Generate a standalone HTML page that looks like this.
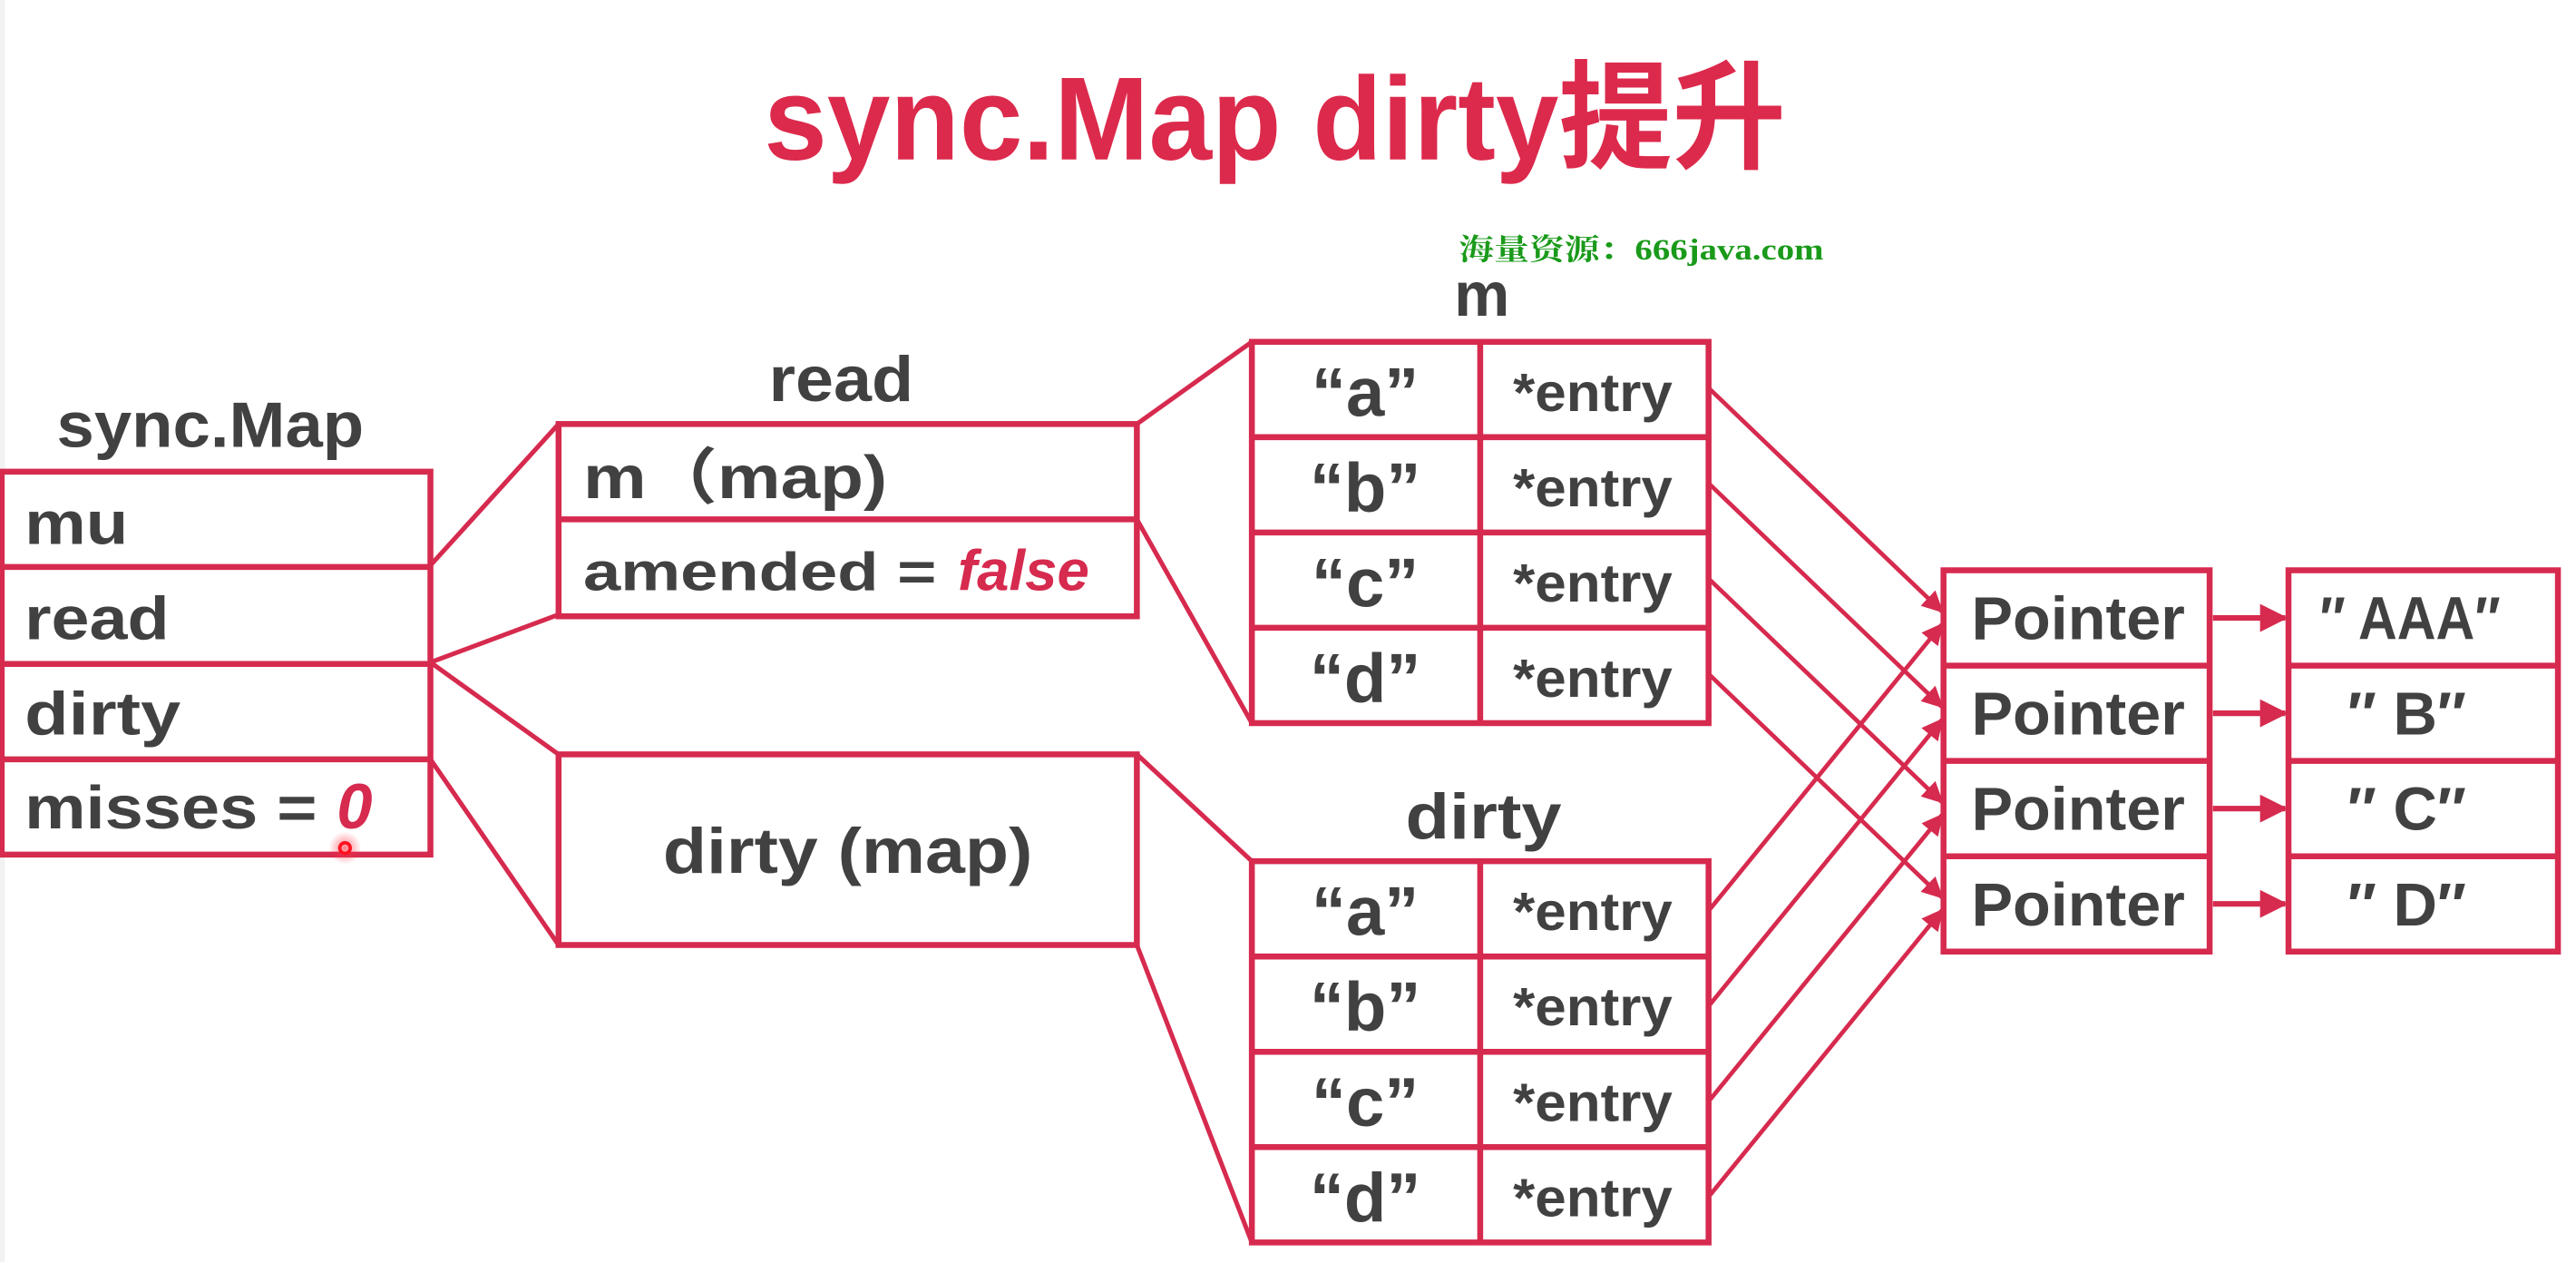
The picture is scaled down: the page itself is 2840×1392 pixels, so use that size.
<!DOCTYPE html>
<html><head><meta charset="utf-8"><style>
html,body{margin:0;padding:0;background:#fff;}
svg{display:block;}
text{font-family:"Liberation Sans","Noto Sans CJK SC",sans-serif;font-weight:bold;fill:#414141;}
</style></head><body>
<svg width="2840" height="1392" viewBox="0 0 1568 768.5" preserveAspectRatio="none" xmlns="http://www.w3.org/2000/svg">
<defs>
<marker id="ah" viewBox="0 0 10 10" refX="9" refY="5" markerWidth="5" markerHeight="5" orient="auto" markerUnits="strokeWidth">
<path d="M0,0 L10,5 L0,10 z" fill="#d62a4e"/></marker>
<radialGradient id="glow"><stop offset="0" stop-color="#ff3040" stop-opacity="0.6"/><stop offset="1" stop-color="#ff3040" stop-opacity="0"/></radialGradient>
</defs>
<rect x="0" y="0" width="3" height="768" fill="#f2f2f2"/>
<text x="776" y="97" text-anchor="middle" font-size="72" style="fill:#dc2a4c" textLength="622" lengthAdjust="spacingAndGlyphs">sync.Map dirty提升</text>
<text x="888" y="158" font-size="18" style="fill:#1a9a1a;font-family:'Liberation Serif','Noto Serif CJK SC',serif" textLength="222" lengthAdjust="spacingAndGlyphs">海量资源：666java.com</text>

<g fill="none" stroke="#d62a4e" stroke-width="3.6">
<rect x="1" y="287" width="261" height="233"/>
<line x1="1" y1="345" x2="262" y2="345"/><line x1="1" y1="404" x2="262" y2="404"/><line x1="1" y1="462" x2="262" y2="462"/>
<rect x="340" y="258" width="352" height="117"/>
<line x1="340" y1="316" x2="692" y2="316"/>
<rect x="340" y="459" width="352" height="116"/>
<rect x="762" y="208" width="278" height="232"/>
<line x1="901" y1="208" x2="901" y2="440"/>
<line x1="762" y1="266" x2="1040" y2="266"/><line x1="762" y1="324" x2="1040" y2="324"/><line x1="762" y1="382" x2="1040" y2="382"/>
<rect x="762" y="524" width="278" height="232"/>
<line x1="901" y1="524" x2="901" y2="756"/>
<line x1="762" y1="582" x2="1040" y2="582"/><line x1="762" y1="640" x2="1040" y2="640"/><line x1="762" y1="698" x2="1040" y2="698"/>
<rect x="1183" y="347" width="162" height="232"/>
<line x1="1183" y1="405" x2="1345" y2="405"/><line x1="1183" y1="463" x2="1345" y2="463"/><line x1="1183" y1="521" x2="1345" y2="521"/>
<rect x="1393" y="347" width="164" height="232"/>
<line x1="1393" y1="405" x2="1557" y2="405"/><line x1="1393" y1="463" x2="1557" y2="463"/><line x1="1393" y1="521" x2="1557" y2="521"/>
</g>
<g fill="none" stroke="#d62a4e" stroke-width="2.8">
<line x1="262" y1="344" x2="340" y2="258"/>
<line x1="262" y1="403" x2="340" y2="374"/>
<line x1="262" y1="403" x2="340" y2="459"/>
<line x1="262" y1="462" x2="340" y2="575"/>
<line x1="692" y1="258" x2="762" y2="208"/>
<line x1="692" y1="316" x2="762" y2="440"/>
<line x1="692" y1="459" x2="762" y2="524"/>
<line x1="692" y1="575" x2="762" y2="756"/>
</g>
<g fill="none" stroke="#d62a4e" stroke-width="2.6" marker-end="url(#ah)">
<line x1="1041" y1="237" x2="1182" y2="372"/>
<line x1="1041" y1="295" x2="1182" y2="430"/>
<line x1="1041" y1="353" x2="1182" y2="488"/>
<line x1="1041" y1="411" x2="1182" y2="546"/>
<line x1="1041" y1="553" x2="1182" y2="380"/>
<line x1="1041" y1="611" x2="1182" y2="438"/>
<line x1="1041" y1="669" x2="1182" y2="496"/>
<line x1="1041" y1="727" x2="1182" y2="554"/>
<line x1="1347" y1="376" x2="1391" y2="376" stroke-width="3.4"/>
<line x1="1347" y1="434" x2="1391" y2="434" stroke-width="3.4"/>
<line x1="1347" y1="492" x2="1391" y2="492" stroke-width="3.4"/>
<line x1="1347" y1="550" x2="1391" y2="550" stroke-width="3.4"/>
</g>

<text x="128" y="272" text-anchor="middle" font-size="39" textLength="187" lengthAdjust="spacingAndGlyphs">sync.Map</text>
<text x="512" y="244" text-anchor="middle" font-size="39" textLength="88" lengthAdjust="spacingAndGlyphs">read</text>
<text x="902" y="192" text-anchor="middle" font-size="38">m</text>
<text x="903" y="510" text-anchor="middle" font-size="39" textLength="95" lengthAdjust="spacingAndGlyphs">dirty</text>

<text x="15" y="331" font-size="37" textLength="63" lengthAdjust="spacingAndGlyphs">mu</text>
<text x="15" y="389" font-size="37" textLength="88" lengthAdjust="spacingAndGlyphs">read</text>
<text x="15" y="447" font-size="37" textLength="95" lengthAdjust="spacingAndGlyphs">dirty</text>
<text x="15" y="504" font-size="37" textLength="178" lengthAdjust="spacingAndGlyphs">misses =</text>
<text x="205" y="504" font-size="39" font-style="italic" style="fill:#d62a4e">0</text>

<text x="355" y="303" font-size="37" textLength="185" lengthAdjust="spacingAndGlyphs">m（map)</text>
<text x="355" y="359" font-size="33" textLength="215" lengthAdjust="spacingAndGlyphs">amended  =</text>
<text x="583" y="359" font-size="35" font-style="italic" style="fill:#d62a4e" textLength="80" lengthAdjust="spacingAndGlyphs">false</text>
<text x="516" y="531" text-anchor="middle" font-size="39" textLength="225" lengthAdjust="spacingAndGlyphs">dirty (map)</text>

<g font-size="42" text-anchor="middle">
<text x="831" y="253">“a”</text><text x="831" y="311">“b”</text><text x="831" y="369">“c”</text><text x="831" y="427">“d”</text>
<text x="831" y="569">“a”</text><text x="831" y="627">“b”</text><text x="831" y="685">“c”</text><text x="831" y="743">“d”</text>
</g>
<g font-size="33">
<text x="921" y="250" textLength="97" lengthAdjust="spacingAndGlyphs">*entry</text>
<text x="921" y="308" textLength="97" lengthAdjust="spacingAndGlyphs">*entry</text>
<text x="921" y="366" textLength="97" lengthAdjust="spacingAndGlyphs">*entry</text>
<text x="921" y="424" textLength="97" lengthAdjust="spacingAndGlyphs">*entry</text>
<text x="921" y="566" textLength="97" lengthAdjust="spacingAndGlyphs">*entry</text>
<text x="921" y="624" textLength="97" lengthAdjust="spacingAndGlyphs">*entry</text>
<text x="921" y="682" textLength="97" lengthAdjust="spacingAndGlyphs">*entry</text>
<text x="921" y="740" textLength="97" lengthAdjust="spacingAndGlyphs">*entry</text>
</g>
<g font-size="37">
<text x="1200" y="389" textLength="130" lengthAdjust="spacingAndGlyphs">Pointer</text>
<text x="1200" y="447" textLength="130" lengthAdjust="spacingAndGlyphs">Pointer</text>
<text x="1200" y="505" textLength="130" lengthAdjust="spacingAndGlyphs">Pointer</text>
<text x="1200" y="563" textLength="130" lengthAdjust="spacingAndGlyphs">Pointer</text>
</g>
<g font-size="37" text-anchor="middle">
<text x="1467" y="389" textLength="110" lengthAdjust="spacingAndGlyphs">″ AAA″</text>
<text x="1465" y="447">″  B″</text>
<text x="1465" y="505">″  C″</text>
<text x="1465" y="563">″  D″</text>
</g>
<circle cx="210" cy="516" r="10" fill="url(#glow)"/>
<circle cx="210" cy="516" r="3.2" fill="none" stroke="#ff1020" stroke-width="2"/>
</svg>
</body></html>
